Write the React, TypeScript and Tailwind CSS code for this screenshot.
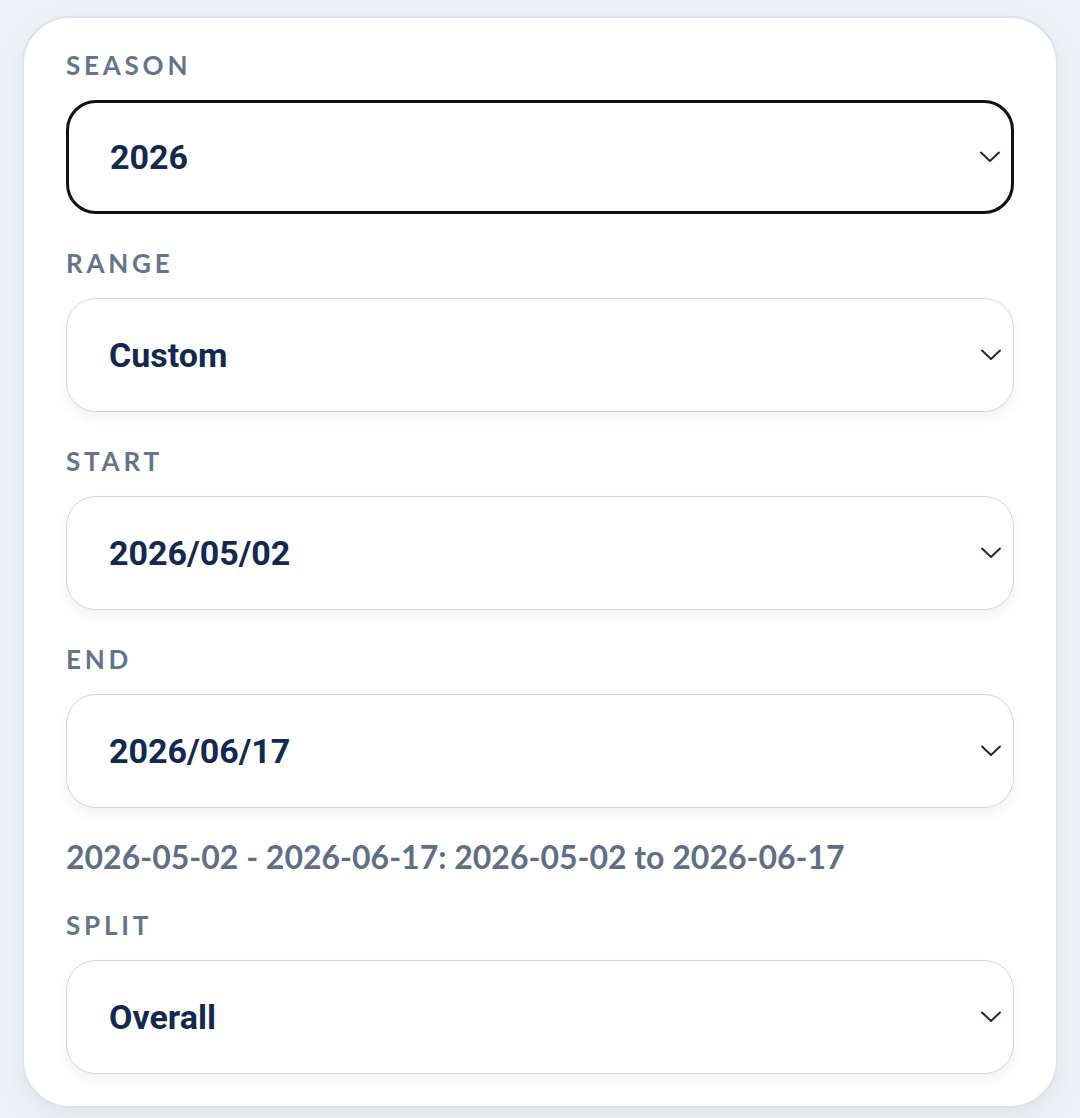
import React from "react";

function Chevron() {
  return (
    <svg width="22" height="14" viewBox="0 0 22 14" fill="none" className="shrink-0">
      <path d="M2 2.5 L11 11 L20 2.5" stroke="#1e293b" strokeWidth="2" strokeLinecap="round" strokeLinejoin="round" />
    </svg>
  );
}

function Field({ label, value, focused }: { label: string; value: string; focused?: boolean }) {
  return (
    <div className="flex flex-col">
      <div className="text-[26px] leading-[34px] font-bold tracking-[0.145em] text-[#64748b] [font-family:Lato,sans-serif]">
        {label}
      </div>
      <div
        className={
          focused
            ? "mt-[18px] h-[114px] rounded-[30px] border-[3px] border-[#111111] bg-white flex items-center justify-between pl-[41px] pr-[10px]"
            : "mt-[18px] h-[114px] rounded-[30px] border-[1.5px] border-[#cfd8e3] bg-white shadow-[0_6px_14px_rgba(15,23,42,0.06)] flex items-center justify-between pl-[42px] pr-[11px]"
        }
      >
        <span className="text-[34px] font-bold text-[#13294f] [font-family:Roboto,sans-serif]">{value}</span>
        <Chevron />
      </div>
    </div>
  );
}

export default function App() {
  return (
    <div className="min-h-screen bg-[#eef1f6] px-[22px] pt-[16px] pb-[12px]">
      <div className="rounded-[48px] border-2 border-[#dde3ec] bg-white shadow-[0_10px_30px_rgba(15,23,42,0.06)] px-[42px] pt-[30px] pb-[32px] flex flex-col gap-[32px]">
        <Field label="SEASON" value="2026" focused />
        <Field label="RANGE" value="Custom" />
        <Field label="START" value="2026/05/02" />
        <Field label="END" value="2026/06/17" />
        <div className="-mt-[2px] text-[32px] leading-[38px] font-bold text-[#5f6f86] [font-family:Lato,sans-serif]">
          2026-05-02 - 2026-06-17: 2026-05-02 to 2026-06-17
        </div>
        <Field label="SPLIT" value="Overall" />
      </div>
    </div>
  );
}
